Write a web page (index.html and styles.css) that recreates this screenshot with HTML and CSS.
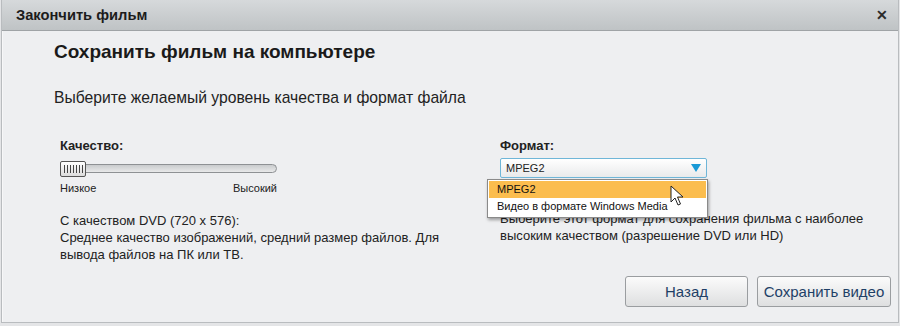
FILE: index.html
```html
<!DOCTYPE html>
<html lang="ru">
<head>
    <meta charset="UTF-8">
    <title>Закончить фильм</title>
    <link rel="stylesheet" href="styles.css">
</head>
<body>
    <div class="dialog">
        <div class="titlebar">
            <span class="title">Закончить фильм</span>
            <span class="close">&#x2715;</span>
        </div>

        <div class="content">
            <h1>Сохранить фильм на компьютере</h1>
            <p class="lead">Выберите желаемый уровень качества и формат файла</p>

            <div class="columns">
                <!-- Quality -->
                <div class="col col-left">
                    <div class="label">Качество:</div>
                    <div class="slider">
                        <div class="track"></div>
                        <div class="thumb">
                            <i></i><i></i><i></i><i></i><i></i><i></i><i></i>
                        </div>
                    </div>
                    <div class="slider-labels">
                        <span>Низкое</span>
                        <span>Высокий</span>
                    </div>
                    <p class="desc">С качеством DVD (720 x 576):<br>Среднее качество изображений, средний размер файлов. Для вывода файлов на ПК или ТВ.</p>
                </div>

                <!-- Format -->
                <div class="col col-right">
                    <div class="label">Формат:</div>
                    <div class="select-wrap">
                        <div class="select">
                            <span>MPEG2</span>
                            <span class="arrow"></span>
                        </div>
                        <ul class="dropdown">
                            <li class="active">MPEG2</li>
                            <li>Видео в формате Windows Media</li>
                        </ul>
                        <svg class="cursor" width="14" height="22" viewBox="0 0 14 22">
                            <path d="M1 1 L1 17 L5 13 L8 20 L10.5 19 L7.5 12 L13 12 Z" fill="#fff" stroke="#222" stroke-width="1"/>
                        </svg>
                    </div>
                    <p class="desc desc-right">Выберите этот формат для сохранения фильма с наиболее высоким качеством (разрешение DVD или HD)</p>
                </div>
            </div>

            <div class="footer">
                <button class="btn btn-back">Назад</button>
                <button class="btn btn-save">Сохранить видео</button>
            </div>
        </div>
    </div>
</body>
</html>
```

FILE: styles.css
```css
body {
    margin: 0;
    padding: 0;
    font-family: 'Liberation Sans', Arial, sans-serif;
    background: #e4e5e7;
}

.dialog {
    width: 896px;
    height: 322px;
    margin-left: 1px;
    border: 1px solid #b9bcbf;
    border-top: none;
    background: #eeeff1;
    display: flex;
    flex-direction: column;
    box-shadow: inset 1px 0 0 #f7f7f8;
}

/* Title bar */
.titlebar {
    height: 30px;
    background: linear-gradient(#d6d9db, #bfc3c5);
    border-bottom: 1px solid #9fa3a6;
    display: flex;
    align-items: center;
    justify-content: space-between;
    padding: 0 10px 0 14px;
}

.title {
    font-size: 14.7px;
    font-weight: bold;
    color: #1c1c1c;
}

.close {
    font-size: 14px;
    font-weight: bold;
    color: #2b2b2b;
}

/* Content */
.content {
    flex: 1;
    padding: 0 0 0 52px;
    display: flex;
    flex-direction: column;
}

h1 {
    margin: 10px 0 0;
    font-size: 19px;
    font-weight: bold;
    color: #1a1a1a;
}

.lead {
    margin: 26px 0 0;
    font-size: 15.7px;
    color: #222;
}

.columns {
    display: flex;
    margin-top: 31px;
    padding-left: 6px;
}

.col-left {
    width: 440px;
}

.col-right {
    width: 380px;
}

.label {
    font-size: 13px;
    font-weight: bold;
    color: #222;
}

/* Slider */
.slider {
    position: relative;
    width: 217px;
    height: 17px;
    margin-top: 7px;
    display: flex;
    align-items: center;
}

.track {
    width: 100%;
    height: 7px;
    border: 1px solid #8e9194;
    border-radius: 5px;
    background: linear-gradient(#c9cbcd, #e8e9ea);
}

.thumb {
    position: absolute;
    left: 0;
    top: 1px;
    width: 24px;
    height: 14px;
    border: 1px solid #555;
    border-radius: 2px;
    background: linear-gradient(#ffffff, #dcdcdc);
    display: flex;
    justify-content: center;
    align-items: center;
    gap: 2px;
}

.thumb i {
    width: 1px;
    height: 8px;
    background: #444;
}

.slider-labels {
    width: 217px;
    display: flex;
    justify-content: space-between;
    font-size: 11px;
    color: #222;
    margin-top: 5px;
}

.desc {
    width: 410px;
    margin: 18px 0 0;
    font-size: 13px;
    line-height: 17px;
    color: #222;
}

/* Select */
.select-wrap {
    position: relative;
    margin-top: 5px;
}

.select {
    width: 200px;
    height: 18px;
    border: 1px solid #6fb6d8;
    border-radius: 2px;
    background: linear-gradient(#ffffff, #e9eaeb);
    display: flex;
    align-items: center;
    justify-content: space-between;
    padding: 0 0 0 5px;
    font-size: 11px;
    color: #222;
}

.arrow {
    width: 0;
    height: 0;
    border-left: 5px solid transparent;
    border-right: 5px solid transparent;
    border-top: 8px solid #1a9ad6;
    margin-right: 5px;
}

.dropdown {
    position: absolute;
    left: -13px;
    top: 21px;
    width: 217px;
    margin: 0;
    padding: 1px 1px 2px;
    list-style: none;
    background: #fff;
    border: 1px solid #8a8a8a;
    box-shadow: 1px 2px 3px rgba(0,0,0,0.35);
    font-size: 11px;
    color: #111;
    z-index: 2;
}

.dropdown li {
    height: 17px;
    line-height: 17px;
    padding-left: 8px;
}

.dropdown .active {
    background: #fbbd4e;
}

.cursor {
    position: absolute;
    left: 170px;
    top: 27px;
    z-index: 3;
}

.desc-right {
    width: 380px;
    margin-top: 32px;
}

/* Footer */
.footer {
    margin-top: auto;
    display: flex;
    justify-content: flex-end;
    gap: 9px;
    padding: 0 7px 15px 0;
}

.btn {
    height: 31px;
    font-family: 'Liberation Sans', Arial, sans-serif;
    font-size: 15px;
    color: #1e3f66;
    background: linear-gradient(#fbfbfb, #dedfe0);
    border: 1px solid #9a9da0;
    border-radius: 3px;
    padding: 0 4px;
}

.btn-back {
    width: 123px;
}

.btn-save {
    width: 134px;
}
```
